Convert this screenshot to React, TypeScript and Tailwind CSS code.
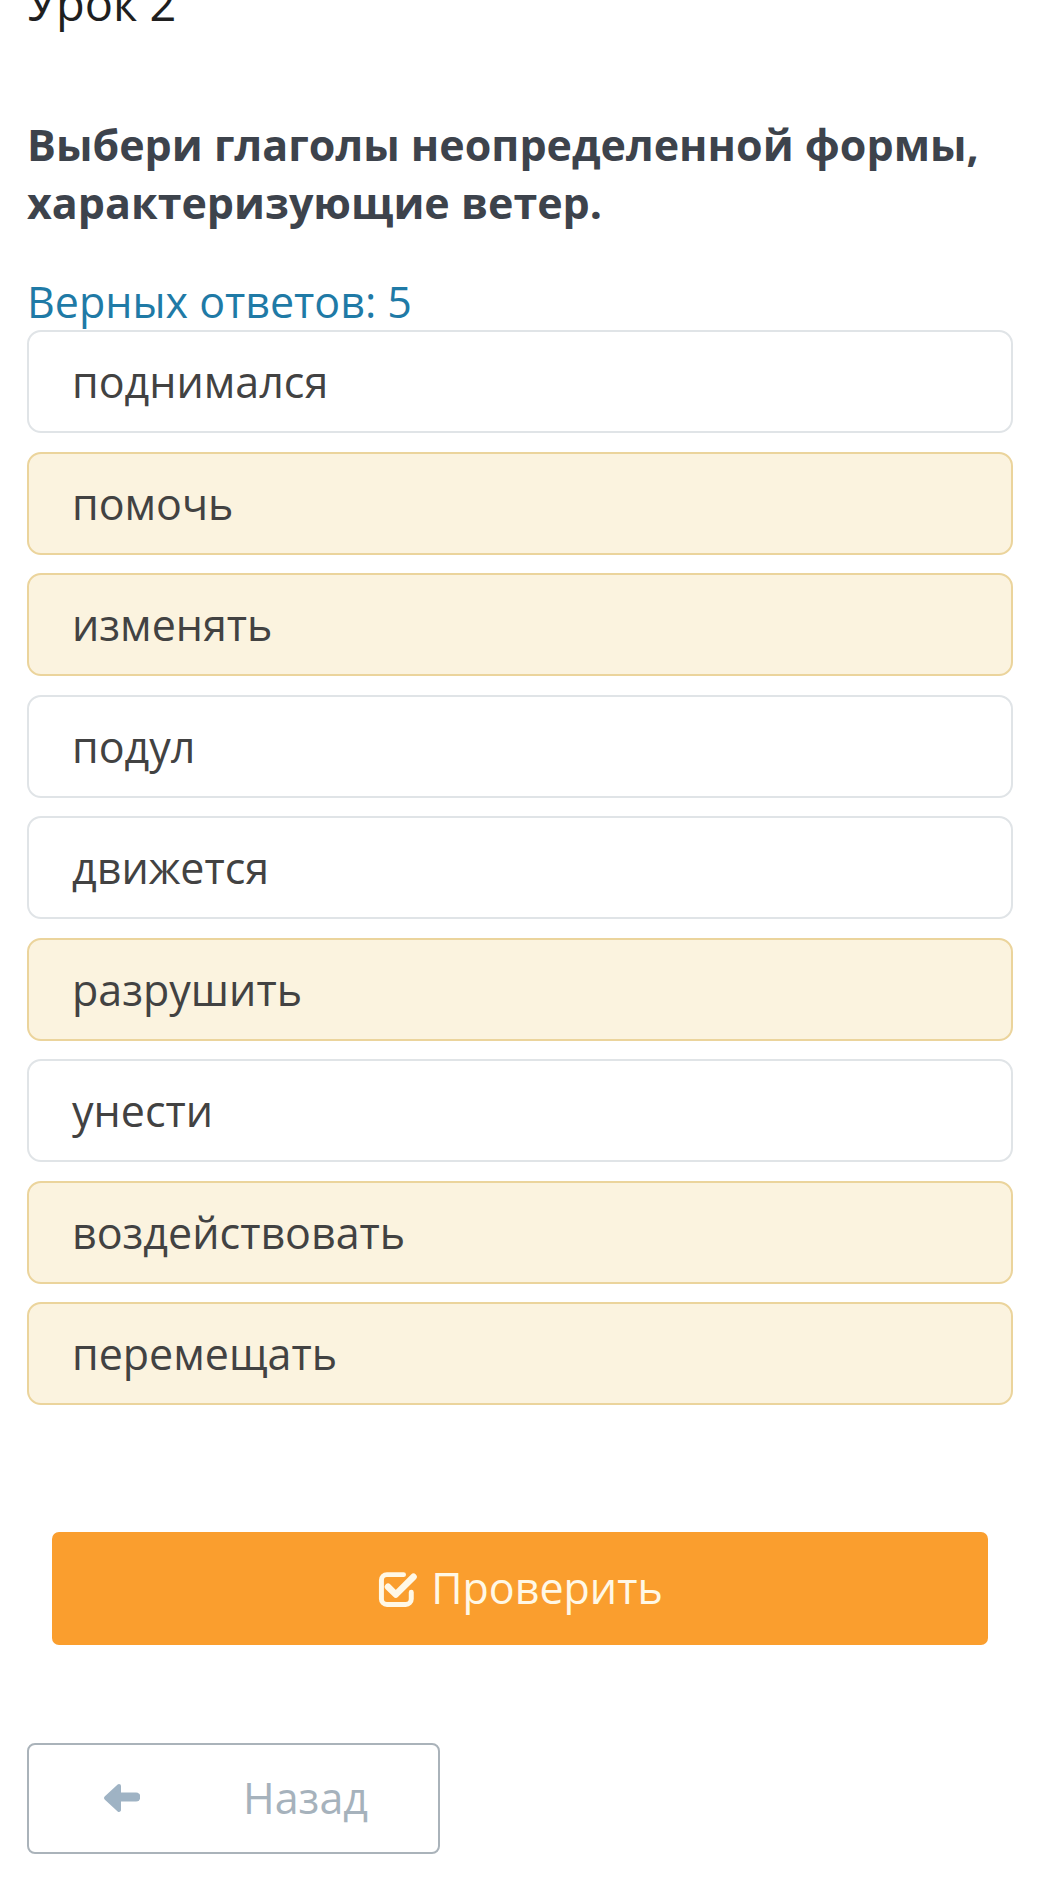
import React from "react";

const options: { text: string; selected: boolean }[] = [
  { text: "поднимался", selected: false },
  { text: "помочь", selected: true },
  { text: "изменять", selected: true },
  { text: "подул", selected: false },
  { text: "движется", selected: false },
  { text: "разрушить", selected: true },
  { text: "унести", selected: false },
  { text: "воздействовать", selected: true },
  { text: "перемещать", selected: true },
];

function CheckSquareIcon() {
  return (
    <svg width="42" height="40" viewBox="0 0 38 36" fill="none">
      <path
        d="M24 5 H9 A5 5 0 0 0 4 10 V27 A5 5 0 0 0 9 32 H26 A5 5 0 0 0 31 27 V21"
        stroke="currentColor"
        strokeWidth="4.5"
        strokeLinecap="round"
      />
      <path
        d="M10 16 L17 23 L33 7"
        stroke="currentColor"
        strokeWidth="6"
        strokeLinecap="round"
        strokeLinejoin="round"
      />
    </svg>
  );
}

function ArrowLeftIcon() {
  return (
    <svg width="38" height="34" viewBox="0 0 38 34" fill="none">
      <path d="M14 15 H34" stroke="currentColor" strokeWidth="9" strokeLinecap="round" />
      <path
        d="M17 4 L4 16 L17 28 Z"
        fill="currentColor"
        stroke="currentColor"
        strokeWidth="4"
        strokeLinejoin="round"
      />
    </svg>
  );
}

export default function App() {
  return (
    <div
      className="w-[1046px] h-[1895px] bg-white overflow-hidden relative"
      style={{ fontFamily: '"Open Sans", "Noto Sans", sans-serif' }}
    >
      <div className="px-[27px]">
        <div className="h-[0px] relative">
          <div className="absolute left-0 top-[-26px] text-[47px] leading-[58px] text-[#1f1f1f]">Урок 2</div>
        </div>
        <h1 className="pt-[116px] text-[43px] leading-[58px] font-bold text-[#3d434c]">
          Выбери глаголы неопределенной формы,
          <br />
          характеризующие ветер.
        </h1>
        <div className="mt-[45px] text-[43px] leading-[50px] text-[#1f7aa6]">Верных ответов: 5</div>
        <div className="mt-[3px] flex flex-col gap-[18.5px] w-[986px]">
          {options.map((o) => (
            <div
              key={o.text}
              className={
                o.selected
                  ? "h-[103px] rounded-[14px] border-2 border-[#ebd49c] bg-[#fbf3df] flex items-center pl-[43px] text-[43px] text-[#424242]"
                  : "h-[103px] rounded-[14px] border-2 border-[#e0e4e7] bg-white flex items-center pl-[43px] text-[43px] text-[#424242]"
              }
            >
              <span className="mt-[2px]">{o.text}</span>
            </div>
          ))}
        </div>
      </div>
      <div className="mt-[127px] px-[52px]">
        <button className="w-[936px] h-[113px] rounded-[7px] bg-[#fa9e2e] flex items-center justify-center gap-[12px] text-[43px] text-[#fff8e6]">
          <CheckSquareIcon />
          <span>Проверить</span>
        </button>
      </div>
      <div className="mt-[98px] px-[27px]">
        <button className="w-[413px] h-[111px] rounded-[8px] border-2 border-[#aab3ba] bg-white flex items-center text-[43px] text-[#a6b2bc]">
          <span className="ml-[72px] w-[40px] flex justify-center text-[#9fb3c4]">
            <ArrowLeftIcon />
          </span>
          <span className="ml-[102px]">Назад</span>
        </button>
      </div>
    </div>
  );
}
